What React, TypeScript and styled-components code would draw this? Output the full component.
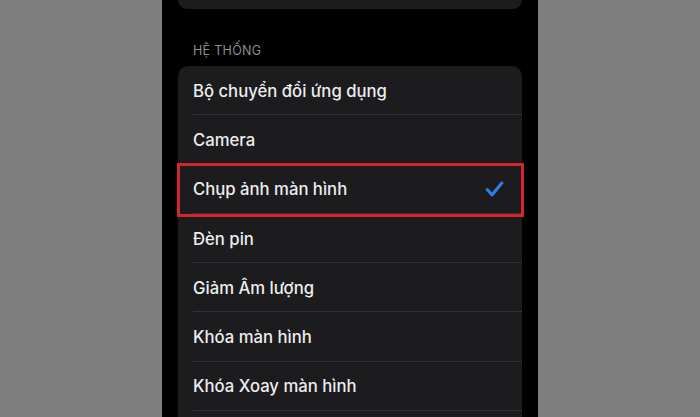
import React from 'react';
import styled, { createGlobalStyle } from 'styled-components';

const GlobalStyle = createGlobalStyle`
  html, body {
    margin: 0;
    padding: 0;
    background: #7f7f7f;
    overflow: hidden;
  }
`;

const Page = styled.div`
  width: 700px;
  height: 417px;
  display: flex;
  justify-content: center;
  background: #7f7f7f;
`;

const Phone = styled.div`
  width: 376px;
  height: 417px;
  background: #000;
  padding: 0 16px;
  box-sizing: border-box;
  display: flex;
  flex-direction: column;
  font-family: Inter, "Noto Sans", sans-serif;
  overflow: hidden;

  & > * {
    flex-shrink: 0;
  }
`;

const TopCard = styled.div`
  height: 9px;
  background: #1c1c1e;
  border-radius: 0 0 10px 10px;
`;

const SectionHeader = styled.div`
  margin: 34px 0 0 15px;
  height: 23px;
  font-size: 12.5px;
  letter-spacing: 0.3px;
  color: #8e8e93;
  text-transform: uppercase;
`;

const ListCard = styled.div`
  background: #1c1c1e;
  border-radius: 10px 10px 0 0;
  display: flex;
  flex-direction: column;
`;

const Row = styled.div`
  position: relative;
  height: 49.3px;
  display: flex;
  align-items: center;
  justify-content: space-between;
  padding: 0 18px 0 15px;
  box-sizing: border-box;
  font-size: 16.7px;
  font-weight: 500;
  color: #ededef;

  &::after {
    content: '';
    position: absolute;
    left: 15px;
    right: 0;
    bottom: 0;
    height: 1px;
    background: #333336;
  }
`;

const Highlight = styled.div`
  position: absolute;
  top: -2px;
  bottom: -3px;
  left: -1px;
  right: -2px;
  border: 3px solid #d3262d;
  z-index: 1;
`;

const Check = () => (
  <svg width="19" height="16" viewBox="0 0 19 16">
    <path d="M2.2 8.6 L7 14 L16.8 2" fill="none" stroke="#2d80e8" strokeWidth="3" strokeLinecap="round" strokeLinejoin="round" />
  </svg>
);

const items = [
  'Bộ chuyển đổi ứng dụng',
  'Camera',
  'Chụp ảnh màn hình',
  'Đèn pin',
  'Giảm Âm lượng',
  'Khóa màn hình',
  'Khóa Xoay màn hình',
];

const App = () => {
  const selected = 2;
  return (
    <Page>
      <GlobalStyle />
      <Phone>
        <TopCard />
        <SectionHeader>Hệ thống</SectionHeader>
        <ListCard>
          {items.map((label, i) => (
            <Row key={label}>
              <span>{label}</span>
              {i === selected && <Check />}
              {i === selected && <Highlight />}
            </Row>
          ))}
          <Row />
        </ListCard>
      </Phone>
    </Page>
  );
};

export default App;
